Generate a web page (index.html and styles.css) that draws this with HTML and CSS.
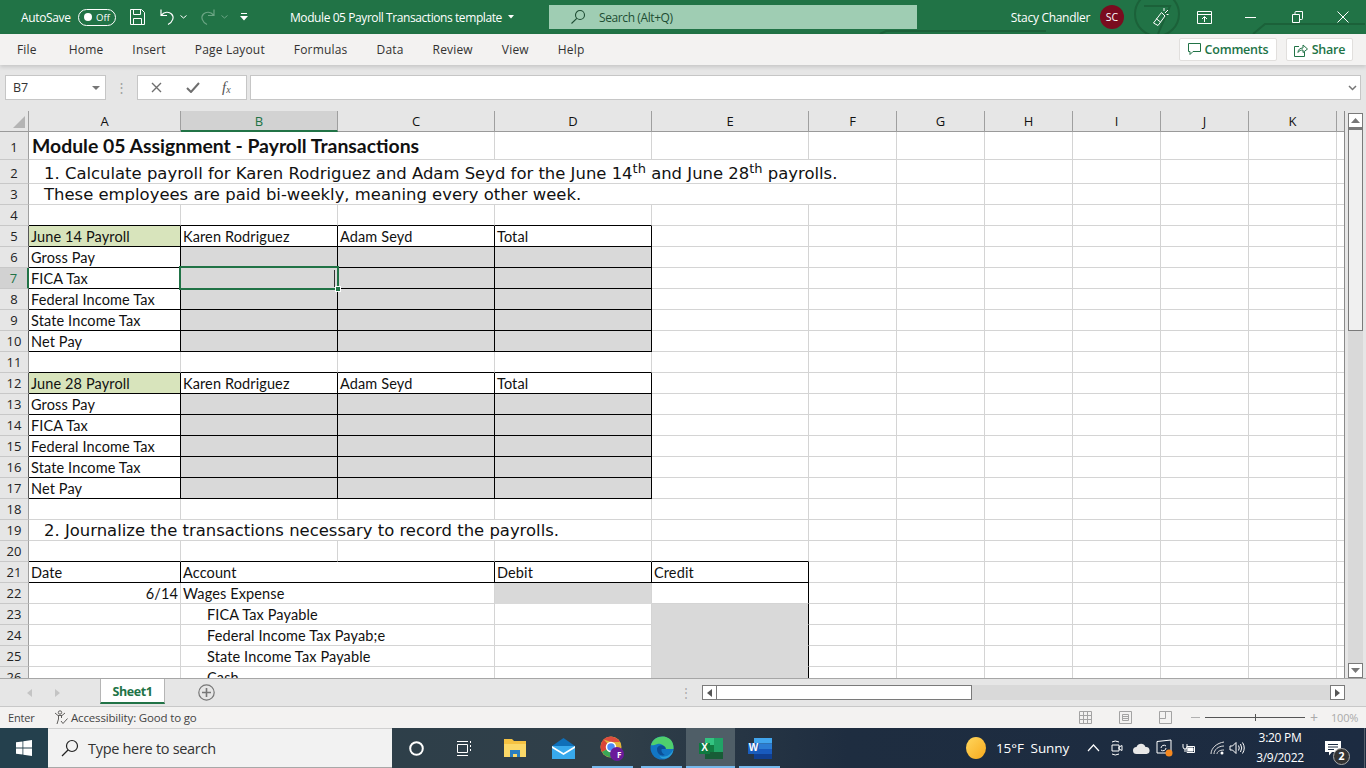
FILE: index.html
```html
<!DOCTYPE html>
<html lang="en">
<head>
<meta charset="utf-8">
<title>Module 05 Payroll Transactions template - Excel</title>
<link rel="stylesheet" href="styles.css">
</head>
<body>
<div class="app">
<header class="titlebar">
  <svg class="title-art" width="500" height="34" viewBox="0 0 500 34" fill="none" stroke="#1b6139" stroke-width="2"><circle cx="291" cy="14" r="22"/><path d="M278 6h26l-12 28M14 34l6-3h160M387 34l12-10h100"/></svg>
  <div class="qat">
    <span class="autosave">AutoSave</span>
    <span class="toggle"><i class="toggle-dot"></i><span class="toggle-text">Off</span></span>
    <svg class="i-save" width="17" height="18" viewBox="0 0 17 18" fill="none" stroke="#fff"><path d="M1.5 1.5h11l3 3v12h-14zM4.5 1.5v5h7v-5M4.5 16.5v-6h8v6"/></svg>
    <svg class="i-undo" width="16" height="18" viewBox="0 0 16 18" fill="none" stroke="#fff" stroke-width="1.2"><path d="M2 1.5v6h6M2.500 7c3-3.500 7.500-3.500 10-1 3 3 1.500 8-3.500 10.500"/></svg>
    <svg class="i-chev" width="7" height="4" viewBox="0 0 7 4" fill="none" stroke="#fff"><path d="M.5.500l3 2.500 3-2.500"/></svg>
    <svg class="i-redo" width="16" height="18" viewBox="0 0 16 18" fill="none" stroke="#6ba584" stroke-width="1.2"><path d="M14 1.500v6H8M13.500 7c-3-3.500-7.500-3.500-10-1-3 3-1.500 8 3.500 10.500"/></svg>
    <svg class="i-chev2" width="7" height="4" viewBox="0 0 7 4" fill="none" stroke="#6ba584"><path d="M.5.500l3 2.500 3-2.500"/></svg>
    <svg class="i-cust" width="8" height="8" viewBox="0 0 8 8" fill="#fff"><path d="M1 0h6v1H1zM0 3h8L4 7.500z"/></svg>
  </div>
  <div class="doc-title">Module 05 Payroll Transactions template<svg class="i-caret" width="6" height="4" viewBox="0 0 6 4" fill="#fff"><path d="M0 0h6L3 3.500z"/></svg></div>
  <div class="search">
    <svg width="16" height="16" viewBox="0 0 16 16" fill="none" stroke="#1e4d33" stroke-width="1.100"><circle cx="10" cy="6" r="4.500"/><path d="M6.800 9.300L1.500 14.500"/></svg>
    <span>Search (Alt+Q)</span>
  </div>
  <div class="spacer"></div>
  <span class="user">Stacy Chandler</span>
  <span class="avatar">SC</span>
  <svg class="i-party" width="18" height="20" viewBox="0 0 18 20" fill="none" stroke="#fff"><path d="M10.500 5.500L14 9l-7 9.500L2.500 16zM5 11.500l4.500 3.500M13 1v3M17 3l-3 3M17.500 7.500h-2"/></svg>
  <svg class="i-ribbon" width="15" height="13" viewBox="0 0 15 13" fill="none" stroke="#fff"><path d="M.5.500h14v12H.5zM.5 3.500h14M7.500 11V6M5 8l2.500-2.500L10 8"/></svg>
  <svg class="i-min" width="11" height="1" viewBox="0 0 11 1" fill="#fff"><path d="M0 0h11v1H0z"/></svg>
  <svg class="i-rest" width="11" height="12" viewBox="0 0 11 12" fill="none" stroke="#fff"><path d="M.5 3.500h7v8h-7zM3 3.500V1.500q0-1 1-1h6.500v7q0 1-1 1H8"/></svg>
  <svg class="i-close" width="12" height="12" viewBox="0 0 12 12" fill="none" stroke="#fff"><path d="M.5.500l11 11M11.500.500l-11 11"/></svg>
</header>

<nav class="tabs">
  <span class="tab tab-file">File</span><span class="tab">Home</span><span class="tab">Insert</span><span class="tab">Page Layout</span><span class="tab">Formulas</span><span class="tab">Data</span><span class="tab">Review</span><span class="tab">View</span><span class="tab">Help</span>
  <div class="spacer"></div>
  <button class="act act-comments"><svg width="13" height="13" viewBox="0 0 13 13" fill="none" stroke="#217346"><path d="M.5.500h12v8H5l-3 3v-3H.5z"/></svg>Comments</button>
  <button class="act act-share"><svg width="14" height="14" viewBox="0 0 14 14" fill="none" stroke="#217346"><path d="M5 3.500H.5v10h10V9M4 9.500c0-3 2-4.500 5-4.500V2l4.500 4L9 9.500V7c-2 0-4 .5-5 2.500z"/></svg>Share</button>
</nav>

<div class="formula">
  <div class="namebox"><span>B7</span><svg width="8" height="4" viewBox="0 0 8 4" fill="#767676"><path d="M0 0h8L4 4z"/></svg></div>
  <span class="dots">⋮</span>
  <div class="fx-btns">
    <svg width="11" height="11" viewBox="0 0 11 11" fill="none" stroke="#6e6e6e" stroke-width="1.400"><path d="M1 1l9 9M10 1l-9 9"/></svg>
    <svg width="14" height="11" viewBox="0 0 14 11" fill="none" stroke="#6e6e6e" stroke-width="2"><path d="M1 6l4 4 8-9"/></svg>
    <span class="fx">f<sub>x</sub></span>
  </div>
  <div class="fx-input"><svg width="9" height="6" viewBox="0 0 9 6" fill="none" stroke="#767676" stroke-width="1.500"><path d="M1 1l3.500 3.500L8 1"/></svg></div>
</div>

<main class="workarea">
  <div class="sheet">
    <table class="grid">
      <colgroup><col class="c-head"><col class="c-a"><col class="c-b"><col class="c-b"><col class="c-b"><col class="c-b"><col class="c-f"><col class="c-f"><col class="c-f"><col class="c-f"><col class="c-f"><col class="c-f"><col class="c-l"></colgroup>
      <tr class="r-cols"><th class="corner"><i class="tri"></i></th><th>A</th><th class="sel">B</th><th>C</th><th>D</th><th>E</th><th>F</th><th>G</th><th>H</th><th>I</th><th>J</th><th>K</th><th></th></tr>
      <tr class="r-h28"><th>1</th><td colspan="3" class="title-cell">Module 05 Assignment - Payroll Transactions</td><td></td><td></td><td></td><td></td><td></td><td></td><td></td><td></td><td></td></tr>
      <tr class="r-h24"><th>2</th><td colspan="6" class="big">1. Calculate payroll for Karen Rodriguez and Adam Seyd for the June 14<sup>th</sup> and June 28<sup>th</sup> payrolls.</td><td></td><td></td><td></td><td></td><td></td><td></td></tr>
      <tr><th>3</th><td colspan="6" class="big">These employees are paid bi-weekly, meaning every other week.</td><td></td><td></td><td></td><td></td><td></td><td></td></tr>
      <tr><th>4</th><td class="bb"></td><td class="bb"></td><td class="bb"></td><td class="bb"></td><td></td><td></td><td></td><td></td><td></td><td></td><td></td><td></td></tr>
      <tr><th class="bk">5</th><td class="b label">June 14 Payroll</td><td class="b">Karen Rodriguez</td><td class="b">Adam Seyd</td><td class="b">Total</td><td></td><td></td><td></td><td></td><td></td><td></td><td></td><td></td></tr>
      <tr><th class="bk">6</th><td class="b">Gross Pay</td><td class="b g"></td><td class="b g"></td><td class="b g"></td><td></td><td></td><td></td><td></td><td></td><td></td><td></td><td></td></tr>
      <tr><th class="sel">7</th><td class="b">FICA Tax</td><td class="b g active"><i class="cursor"></i><i class="handle"></i></td><td class="b g"></td><td class="b g"></td><td></td><td></td><td></td><td></td><td></td><td></td><td></td><td></td></tr>
      <tr><th class="bk">8</th><td class="b">Federal Income Tax</td><td class="b g"></td><td class="b g"></td><td class="b g"></td><td></td><td></td><td></td><td></td><td></td><td></td><td></td><td></td></tr>
      <tr><th class="bk">9</th><td class="b">State Income Tax</td><td class="b g"></td><td class="b g"></td><td class="b g"></td><td></td><td></td><td></td><td></td><td></td><td></td><td></td><td></td></tr>
      <tr><th class="bk">10</th><td class="b">Net Pay</td><td class="b g"></td><td class="b g"></td><td class="b g"></td><td></td><td></td><td></td><td></td><td></td><td></td><td></td><td></td></tr>
      <tr><th>11</th><td class="bb"></td><td class="bb"></td><td class="bb"></td><td class="bb"></td><td></td><td></td><td></td><td></td><td></td><td></td><td></td><td></td></tr>
      <tr><th class="bk">12</th><td class="b label">June 28 Payroll</td><td class="b">Karen Rodriguez</td><td class="b">Adam Seyd</td><td class="b">Total</td><td></td><td></td><td></td><td></td><td></td><td></td><td></td><td></td></tr>
      <tr><th class="bk">13</th><td class="b">Gross Pay</td><td class="b g"></td><td class="b g"></td><td class="b g"></td><td></td><td></td><td></td><td></td><td></td><td></td><td></td><td></td></tr>
      <tr><th class="bk">14</th><td class="b">FICA Tax</td><td class="b g"></td><td class="b g"></td><td class="b g"></td><td></td><td></td><td></td><td></td><td></td><td></td><td></td><td></td></tr>
      <tr><th class="bk">15</th><td class="b">Federal Income Tax</td><td class="b g"></td><td class="b g"></td><td class="b g"></td><td></td><td></td><td></td><td></td><td></td><td></td><td></td><td></td></tr>
      <tr><th class="bk">16</th><td class="b">State Income Tax</td><td class="b g"></td><td class="b g"></td><td class="b g"></td><td></td><td></td><td></td><td></td><td></td><td></td><td></td><td></td></tr>
      <tr><th class="bk">17</th><td class="b">Net Pay</td><td class="b g"></td><td class="b g"></td><td class="b g"></td><td></td><td></td><td></td><td></td><td></td><td></td><td></td><td></td></tr>
      <tr><th>18</th><td></td><td></td><td></td><td></td><td></td><td></td><td></td><td></td><td></td><td></td><td></td><td></td></tr>
      <tr><th>19</th><td colspan="4" class="big">2. Journalize the transactions necessary to record the payrolls.</td><td></td><td></td><td></td><td></td><td></td><td></td><td></td><td></td><td></td></tr>
      <tr><th>20</th><td class="bb"></td><td class="bb"></td><td class="bb"></td><td class="bb"></td><td class="bb"></td><td></td><td></td><td></td><td></td><td></td><td></td><td></td></tr>
      <tr><th>21</th><td class="b">Date</td><td colspan="2" class="b">Account</td><td class="b">Debit</td><td class="b">Credit</td><td></td><td></td><td></td><td></td><td></td><td></td><td></td></tr>
      <tr><th>22</th><td class="num">6/14</td><td colspan="2">Wages Expense</td><td class="g gb"></td><td class="br"></td><td></td><td></td><td></td><td></td><td></td><td></td><td></td></tr>
      <tr><th>23</th><td></td><td colspan="2" class="ind">FICA Tax Payable</td><td></td><td class="br g gb"></td><td></td><td></td><td></td><td></td><td></td><td></td><td></td></tr>
      <tr><th>24</th><td></td><td colspan="2" class="ind">Federal Income Tax Payab;e</td><td></td><td class="br g gb"></td><td></td><td></td><td></td><td></td><td></td><td></td><td></td></tr>
      <tr><th>25</th><td></td><td colspan="2" class="ind">State Income Tax Payable</td><td></td><td class="br g gb"></td><td></td><td></td><td></td><td></td><td></td><td></td><td></td></tr>
      <tr><th>26</th><td></td><td colspan="2" class="ind">Cash</td><td></td><td class="br g gb"></td><td></td><td></td><td></td><td></td><td></td><td></td><td></td></tr>
    </table>
  </div>
  <aside class="vscroll">
    <span class="sb-btn"><svg width="9" height="5" viewBox="0 0 9 5" fill="#777"><path d="M4.500 0L9 5H0z"/></svg></span>
    <span class="sb-thumb"></span>
    <span class="sb-track"></span>
    <span class="sb-btn"><svg width="9" height="5" viewBox="0 0 9 5" fill="#777"><path d="M0 0h9L4.500 5z"/></svg></span>
  </aside>
</main>

<div class="sheetbar">
  <svg class="nav-l" width="5" height="8" viewBox="0 0 5 8" fill="#c4c4c4"><path d="M5 0v8L0 4z"/></svg>
  <svg class="nav-r" width="5" height="8" viewBox="0 0 5 8" fill="#c4c4c4"><path d="M0 0v8l5-4z"/></svg>
  <span class="sheet-tab">Sheet1</span>
  <svg class="add" width="17" height="17" viewBox="0 0 17 17" fill="none" stroke="#777"><circle cx="8.500" cy="8.500" r="7.700" stroke-width="1.200"/><path d="M8.500 4v9M4 8.500h9" stroke-width="1.600"/></svg>
  <span class="sb-dots">⋮</span>
  <div class="hscroll">
    <span class="hb"><svg width="5" height="8" viewBox="0 0 5 8" fill="#555"><path d="M5 0v8L0 4z"/></svg></span>
    <span class="hthumb"></span>
    <span class="htrack"></span>
    <span class="hb"><svg width="5" height="8" viewBox="0 0 5 8" fill="#555"><path d="M0 0v8l5-4z"/></svg></span>
  </div>
</div>

<footer class="status">
  <span class="st-enter">Enter</span>
  <svg class="st-acc" width="15" height="15" viewBox="0 0 15 15" fill="none" stroke="#605e5c"><circle cx="6" cy="2.500" r="1.700"/><path d="M1 3l3 2.500h4L11 3M4.500 6v3l-1.500 5M7.500 6v2M7 11l2 2.500 4.500-5"/></svg>
  <span class="st-text">Accessibility: Good to go</span>
  <div class="spacer"></div>
  <svg class="st-v1" width="13" height="13" viewBox="0 0 13 13" fill="none" stroke="#a3a3a3"><path d="M.5.500h12v12H.5zM4.500.500v12M8.500.500v12M.5 4.500h12M.5 8.500h12"/></svg>
  <svg class="st-v2" width="13" height="13" viewBox="0 0 13 13" fill="none" stroke="#a3a3a3"><path d="M.5.500h12v12H.5zM3.500 3.500h6v6h-6zM3.500 5.500h6M3.500 7.500h6"/></svg>
  <svg class="st-v3" width="13" height="13" viewBox="0 0 13 13" fill="none" stroke="#a3a3a3"><path d="M.5.500h12v12H.5zM.5 7.500h6V.5"/></svg>
  <span class="st-minus"></span>
  <span class="slider"><i class="tick"></i></span>
  <span class="st-plus">+</span>
  <span class="st-zoom">100%</span>
</footer>

<div class="taskbar">
  <div class="start"><svg width="16" height="16" viewBox="0 0 16 16" fill="#fff"><path d="M0 2.300l6.500-.9v6.200H0zM7.300 1.300L16 0v7.600H7.300zM0 8.400h6.500v6.200L0 13.700zM7.300 8.400H16V16l-8.700-1.300z"/></svg></div>
  <div class="tsearch"><svg width="18" height="18" viewBox="0 0 18 18" fill="none" stroke="#222" stroke-width="1.200"><circle cx="11" cy="7" r="5.500"/><path d="M7 11l-6 6"/></svg><span>Type here to search</span></div>
  <div class="tb-app"><svg width="15" height="15" viewBox="0 0 15 15" fill="none" stroke="#fff" stroke-width="2"><circle cx="7.500" cy="7.500" r="6.300"/></svg></div>
  <div class="tb-app tb-view"><svg width="17" height="17" viewBox="0 0 17 17" fill="none" stroke="#fff"><path d="M2.500 4.500h10v8h-10zM2 1.500h11M2 15.500h11M15.500 1v2M15.500 5v2M15.500 9v2"/></svg></div>
  <div class="tb-app"><svg width="24" height="20" viewBox="0 0 24 20"><path d="M1 1h8l2 2h12v16H1z" fill="#f5c242"/><path d="M1 6h22v13H1z" fill="#fbd868"/><path d="M7 12h10v7h-3v-3h-4v3H7z" fill="#2a7ec0"/></svg></div>
  <div class="tb-app"><svg width="25" height="21" viewBox="0 0 25 21"><path d="M12.500 0L24 8v13H1V8z" fill="#0f6fb8"/><path d="M1 8h23v13H1z" fill="#38a9ec"/><path d="M1 8l11.500 7L24 8v2l-11.500 7L1 10z" fill="#fff"/></svg></div>
  <div class="tb-app tb-on"><svg width="25" height="25" viewBox="0 0 25 25"><circle cx="11" cy="11" r="10.500" fill="#e2b33b"/><path d="M11 11L2 16A10.500 10.500 0 0 1 3.500 3.500z" fill="#d94536"/><path d="M11 11l-9 5a10.500 10.500 0 0 0 12 4.700z" fill="#3aa757"/><path d="M3.500 3.500A10.500 10.500 0 0 1 20 6H11z" fill="#de4d3e"/><circle cx="11" cy="11" r="4.500" fill="#4c8bf5" stroke="#fff" stroke-width="1.500"/><circle cx="17" cy="18" r="7" fill="#6a1b9a"/></svg><span class="f-badge">F</span></div>
  <div class="tb-app tb-on tb-edge"><svg width="24" height="24" viewBox="0 0 24 24"><circle cx="12" cy="12" r="11.500" fill="#1276c4"/><path d="M1 9C3 2 10-.5 16 1c5 1.500 8 6 7.500 12h-11c3-3-1-6-5-5-3 .7-5 2-6.500 1z" fill="#4fcf6d"/><path d="M23.500 13c-.2 3-1.500 6-4.500 8-4 2.500-8 2-9.500-1 5 2 11 0 14-7z" fill="#2a9fd8"/><path d="M7 13c0-4 8-6 9 0h-4c-1 0-1 4 3 6-4 1.500-8-1-8-6z" fill="#0c4f96"/></svg></div>
  <div class="tb-app tb-on tb-active"><svg width="24" height="21" viewBox="0 0 24 21"><path d="M6 0h18v7H6z" fill="#33c481"/><path d="M6 7h18v7H6z" fill="#107c41"/><path d="M6 14h18v7H6z" fill="#185c37"/><path d="M15 0h9v7h-9zM15 7h9v7h-9z" fill="#21a366"/><path d="M0 5h11v11H0z" fill="#0f7a3f"/></svg><span class="x-mark">X</span></div>
  <div class="tb-app tb-on tb-word"><svg width="24" height="21" viewBox="0 0 24 21"><path d="M6 0h18v5.500H6z" fill="#41a5ee"/><path d="M6 5.500h18V11H6z" fill="#2b7cd3"/><path d="M6 11h18v5H6z" fill="#185abd"/><path d="M6 16h18v5H6z" fill="#103f91"/><path d="M0 5h11v11H0z" fill="#1a5dbd"/></svg><span class="w-mark">W</span></div>
  <div class="spacer"></div>
  <i class="sun"></i>
  <span class="weather">15°F&nbsp;&nbsp;Sunny</span>
  <svg class="tray t-chev" width="13" height="8" viewBox="0 0 13 8" fill="none" stroke="#fff" stroke-width="1.200"><path d="M1 7l5.500-6L12 7"/></svg>
  <svg class="tray t-meet" width="12" height="18" viewBox="0 0 12 18" fill="none" stroke="#fff"><path d="M1 6h7v6H1zM8 8l3-1.500v5L8 10zM1 3q3-2 7 0M1 15q3 2 7 0"/></svg>
  <svg class="tray t-cloud" width="17" height="11" viewBox="0 0 17 11" fill="#e8e8e8"><path d="M3.500 11a3.500 3.500 0 0 1 0-7C5 0 11-.5 12.500 4a3.500 3.500 0 0 1 1 7z"/></svg>
  <svg class="tray t-sync" width="18" height="18" viewBox="0 0 18 18"><path d="M1 2.500l14-1.500v13H1z" fill="none" stroke="#fff"/><path d="M5 9a3 3 0 0 1 5-2M10 9a3 3 0 0 1-5 2" fill="none" stroke="#fff"/><circle cx="13" cy="14" r="3.500" fill="#f7891f"/></svg>
  <svg class="tray t-power" width="13" height="11" viewBox="0 0 13 11" fill="none" stroke="#fff"><path d="M5 3.500h7.500v6H5z" /><path d="M6 5h5v3H6z" fill="#fff"/><path d="M1 1v3a2 2 0 0 0 4 0V1M3 6v3"/></svg>
  <svg class="tray t-wifi" width="15" height="14" viewBox="0 0 15 14" fill="none" stroke="#ddd"><path d="M1 13C1 7 7 2 14 1M4 13c0-4 4-8 10-8M7 13c0-2 2-4 7-4"/><circle cx="12" cy="12" r="1.500" fill="#fff" stroke="none"/></svg>
  <svg class="tray t-vol" width="16" height="14" viewBox="0 0 16 14" fill="none" stroke="#fff"><path d="M1 5h2.500L7 1.500v11L3.500 9H1zM9.500 4.500q1.500 2.500 0 5M11.500 3q2.500 4 0 8M13.500 1.500q3.500 5.500 0 11"/></svg>
  <div class="clock"><span>3:20 PM</span><span>3/9/2022</span></div>
  <div class="notif"><svg width="16" height="15" viewBox="0 0 16 15" fill="#fff"><path d="M0 0h16v11H7l-3 3.500V11H0z"/><path d="M3 3h10v1H3zM3 5.500h10v1H3zM3 8h6v1H3z" fill="#1c2c42"/></svg><span class="n-badge">2</span></div>
</div>
</div>
</body>
</html>
```
FILE: styles.css
```css
* { box-sizing: border-box; }
html, body { margin: 0; padding: 0; height: 100%; overflow: hidden; }
body { font-family: "Open Sans", "Noto Sans", sans-serif; font-size: 12px; color: #252423; }
.app { width: 1366px; height: 768px; display: flex; flex-direction: column; overflow: hidden; background: #e6e6e6; }
.spacer { flex: 1; }

/* title bar */
.titlebar { position: relative; height: 34px; flex: none; background: #217346; color: #fff; display: flex; align-items: center; overflow: hidden; }
.title-art { position: absolute; right: 0; top: 0; }
.titlebar > :not(.title-art) { position: relative; }
.qat { width: 290px; flex: none; display: flex; align-items: center; padding-left: 21px; }
.autosave { font-size: 12px; letter-spacing: -.35px; width: 57px; }
.toggle { width: 38px; height: 17px; border: 1px solid #fff; border-radius: 9px; display: flex; align-items: center; padding-left: 5px; }
.toggle-dot { width: 8px; height: 8px; border-radius: 50%; background: #fff; margin-right: 4px; }
.toggle-text { font-size: 9.5px; }
.i-save { margin-left: 13px; }
.i-undo { margin-left: 13px; }
.i-chev { margin-left: 5px; }
.i-redo { margin-left: 13px; }
.i-chev2 { margin-left: 5px; }
.i-cust { margin-left: 12px; }
.doc-title { width: 259px; flex: none; font-size: 12px; letter-spacing: -.42px; display: flex; align-items: center; white-space: nowrap; }
.i-caret { margin-left: 6px; }
.search { width: 368px; height: 24px; flex: none; background: #9fcdb3; display: flex; align-items: center; padding-left: 21px; color: #1e4d33; font-size: 12px; letter-spacing: -.4px; }
.search span { margin-left: 13px; }
.user { font-size: 12px; letter-spacing: -.3px; margin-right: 10px; }
.avatar { width: 24px; height: 24px; border-radius: 50%; background: #7a0c1f; font-size: 10.5px; display: flex; align-items: center; justify-content: center; }
.i-party { margin-left: 27px; }
.i-ribbon { margin-left: 28px; }
.i-min { margin-left: 33px; }
.i-rest { margin-left: 36px; }
.i-close { margin-left: 34px; margin-right: 17px; }

/* ribbon tabs */
.tabs { position: relative; z-index: 2; height: 31px; flex: none; background: #f3f2f1; box-shadow: 0 2px 4px rgba(0,0,0,.14); display: flex; align-items: center; padding: 0 13px 0 17px; gap: 29px; }
.tab { font-size: 12px; letter-spacing: .18px; color: #323130; }
.tab-file { margin-right: 3px; }
.act { height: 23px; background: #fff; border: 1px solid #e1dfdd; border-radius: 2px; color: #217346; font-family: inherit; font-size: 12.5px; font-weight: 600; letter-spacing: -.2px; display: flex; align-items: center; gap: 4px; padding: 0; justify-content: center; }
.act-comments { width: 98px; margin-right: -20px; }
.act-share { width: 67px; }

/* formula bar */
.formula { height: 46px; flex: none; display: flex; align-items: flex-start; padding: 10px 5px 0; }
.namebox { width: 101px; height: 25px; background: #fff; border: 1px solid #c6c6c6; display: flex; align-items: center; justify-content: space-between; padding: 0 5px 0 7px; font-size: 12.5px; color: #333; }
.dots { width: 31px; text-align: center; color: #a0a0a0; line-height: 25px; font-size: 13px; }
.fx-btns { width: 110px; height: 25px; background: #fff; border: 1px solid #c6c6c6; display: flex; align-items: center; padding-left: 13px; gap: 24px; }
.fx { font-family: "Liberation Serif", serif; font-style: italic; font-size: 15px; color: #555; line-height: 1; margin-left: -2px; }
.fx sub { font-size: 10px; vertical-align: -1px; }
.fx-input { width: 1111px; height: 25px; margin-left: 3px; background: #fff; border: 1px solid #c6c6c6; display: flex; align-items: center; justify-content: flex-end; padding-right: 3px; }

/* worksheet */
.workarea { height: 567px; flex: none; display: flex; }
.sheet { width: 1345px; height: 567px; overflow: hidden; flex: none; border-right: 1px solid #8a8a8a; background: #fff; }
.grid { border-collapse: separate; border-spacing: 0; table-layout: fixed; width: 1345px; font-family: "Lato", sans-serif; font-size: 14.5px; letter-spacing: .12px; color: #111; }
.c-head { width: 29px; }
.c-a { width: 152px; }
.c-b { width: 157px; }
.c-f { width: 88px; }
.c-l { width: 8px; }
.grid tr { height: 21px; }
.grid tr.r-h28 { height: 28px; }
.grid tr.r-h24 { height: 24px; }
.grid td { padding: 0 2px 0 2px; vertical-align: bottom; white-space: nowrap; border-right: 1px solid #d4d4d4; border-bottom: 1px solid #d4d4d4; line-height: 18px; background: #fff; overflow: visible; }
.grid th { padding: 0; font-family: "Open Sans", sans-serif; font-weight: 400; font-size: 13px; letter-spacing: 0; color: #222; background: #e6e6e6; border-right: 1px solid #9f9f9f; border-bottom: 1px solid #c8c8c8; line-height: 18px; }
.r-h28 th, .r-h24 th { padding-top: 2px; }
.r-cols th { border-bottom: 1px solid #9a9a9a; font-size: 13px; color: #111; }
.r-cols th:last-child { border-right: 0; }
.corner { position: relative; }
.tri { position: absolute; right: 3px; bottom: 3px; width: 0; height: 0; border-style: solid; border-width: 0 0 12px 12px; border-color: transparent transparent #b4b4b4 transparent; }
.grid th.sel { background: #d2d2d2; color: #217346; }
.r-cols th.sel { border-bottom: 2px solid #217346; }
tr:not(.r-cols) > th.sel { border-right: 2px solid #217346; }
.grid th.bk { border-right-color: #555; }
.grid td.bb { border-bottom-color: #000; }
.grid td.b { border-right-color: #000; border-bottom-color: #000; }
.grid td.br { border-right-color: #000; }
.grid td.g { background: #d9d9d9; }
.grid td.gb { border-bottom-color: #d9d9d9; }
.grid td.label { background: #d8e4bc; }
.grid td.num { text-align: right; }
.grid td.ind { padding-left: 26px; }
.grid td.title-cell { font-size: 19.4px; font-weight: 700; letter-spacing: 0; padding: 0 0 1px 3px; line-height: 24px; }
.grid td.big { font-family: "DejaVu Sans", sans-serif; font-size: 16.45px; letter-spacing: 0; padding-left: 15px; line-height: 18px; }
.grid sup { font-size: 13px; line-height: 0; vertical-align: 6px; }
.active { position: relative; }
.active::before { content: ""; position: absolute; left: -2px; top: -2px; right: -2px; bottom: -2px; border: 2px solid #217346; }
.cursor { position: absolute; right: 2px; top: 2px; width: 1px; height: 17px; background: #333; }
.handle { position: absolute; right: -4px; bottom: -4px; width: 6px; height: 6px; background: #217346; border: 1px solid #fff; }

/* vertical scrollbar */
.vscroll { width: 21px; flex: none; display: flex; flex-direction: column; padding: 2px 3px 0 3px; background: #e6e6e6; }
.sb-btn { height: 15px; flex: none; background: #fff; border: 1px solid #7a7a7a; display: flex; align-items: center; justify-content: center; }
.sb-thumb { height: 203px; flex: none; background: #f0f0f0; border: 1px solid #7a7a7a; border-top-width: 2px; }
.sb-track { flex: 1; background: #d9d9d9; }

/* sheet tabs */
.sheetbar { height: 29px; flex: none; border-top: 1px solid #a6a6a6; border-bottom: 1px solid #c8c8c8; display: flex; align-items: center; }
.nav-l { margin-left: 27px; }
.nav-r { margin-left: 23px; }
.sheet-tab { align-self: flex-start; margin-left: 40px; width: 65px; height: 25px; background: #fff; border: 1px solid #b5b5b5; border-top: 0; border-bottom: 2px solid #217346; color: #217346; font-weight: 700; font-size: 12.5px; letter-spacing: -.4px; text-align: center; line-height: 25px; }
.add { margin-left: 33px; }
.sb-dots { margin-left: 465px; width: 8px; color: #aaa; font-size: 12px; }
.hscroll { margin-left: 14px; width: 643px; height: 15px; display: flex; background: #d9d9d9; }
.hb { width: 15px; flex: none; background: #fff; border: 1px solid #7a7a7a; display: flex; align-items: center; justify-content: center; }
.hthumb { width: 255px; flex: none; background: #fff; border: 1px solid #7a7a7a; border-left: 0; }
.htrack { flex: 1; }

/* status bar */
.status { height: 21px; flex: none; background: #f3f2f1; display: flex; align-items: center; font-size: 11px; color: #444; padding-right: 8px; }
.st-enter { margin-left: 8px; width: 46px; letter-spacing: -.2px; }
.st-acc { flex: none; }
.st-text { margin-left: 2px; font-size: 11.5px; letter-spacing: -.16px; }
.st-v1 { margin-right: 27px; }
.st-v2 { margin-right: 27px; }
.st-v3 { margin-right: 19px; }
.st-minus { width: 9px; height: 1px; background: #b0b0b0; margin-right: 5px; }
.slider { position: relative; width: 100px; height: 1px; background: #555; }
.tick { position: absolute; left: 50px; top: -3px; width: 1px; height: 7px; background: #555; }
.st-plus { width: 18px; margin-right: 8px; text-align: center; font-size: 14px; color: #aaa; }
.st-zoom { color: #aaa; letter-spacing: -.2px; width: 27px; white-space: nowrap; }

/* taskbar */
.taskbar { height: 40px; flex: none; display: flex; align-items: center; background: linear-gradient(90deg, #2a3f4a 0, #303f49 45%, #1e2d40 62%, #1c2b41 100%); color: #fff; }
.start { width: 48px; height: 40px; background: #24404d; display: flex; align-items: center; justify-content: center; }
.tsearch { width: 344px; height: 40px; background: #f2f2f2; border-top: 1px solid #d0d0d0; border-bottom: 1px solid #a8a8a8; display: flex; align-items: center; padding-left: 13px; gap: 9px; color: #333; font-size: 14.5px; letter-spacing: -.3px; }
.tb-app { position: relative; width: 49px; height: 40px; display: flex; align-items: center; justify-content: center; flex: none; }
.tb-view svg { margin-right: 4px; }
.tb-on::after { content: ""; position: absolute; left: 4px; right: 4px; bottom: 0; height: 2px; background: #76b9ed; }
.tb-active { background: #4f5e67; }
.tb-active::after { left: 0; right: 0; }
.f-badge { position: absolute; left: 29px; top: 22px; font-size: 8px; font-weight: 700; line-height: 10px; }
.x-mark, .w-mark { position: absolute; top: 13px; left: 13px; font-family: "Liberation Sans", sans-serif; font-size: 10px; font-weight: 700; line-height: 14px; width: 11px; text-align: center; }
.sun { width: 20px; height: 22px; border-radius: 50%; background: linear-gradient(135deg, #ffd75e, #f8a91c); flex: none; }
.weather { margin-left: 10px; font-size: 13.5px; letter-spacing: -.1px; width: 86px; flex: none; white-space: nowrap; }
.tray { flex: none; }
.t-chev { margin-left: 5px; }
.t-meet { margin-left: 11px; }
.t-cloud { margin-left: 9.5px; }
.t-sync { margin-left: 6.5px; }
.t-power { margin-left: 7.5px; }
.t-wifi { margin-left: 15px; }
.t-vol { margin-left: 4.5px; }
.clock { width: 64px; margin-left: 3px; display: flex; flex-direction: column; align-items: center; font-size: 12px; letter-spacing: -.3px; line-height: 20px; }
.notif { position: relative; width: 40px; height: 40px; margin: 0 13px 0 1px; display: flex; align-items: center; justify-content: center; }
.notif::after { content: ""; position: absolute; left: 51px; top: 0; width: 1px; height: 40px; background: #55606c; }
.n-badge { position: absolute; left: 20px; top: 20px; width: 17px; height: 17px; border-radius: 50%; background: #333; border: 1px solid #aaa; font-size: 10.5px; font-weight: 700; text-align: center; line-height: 15px; }
```
